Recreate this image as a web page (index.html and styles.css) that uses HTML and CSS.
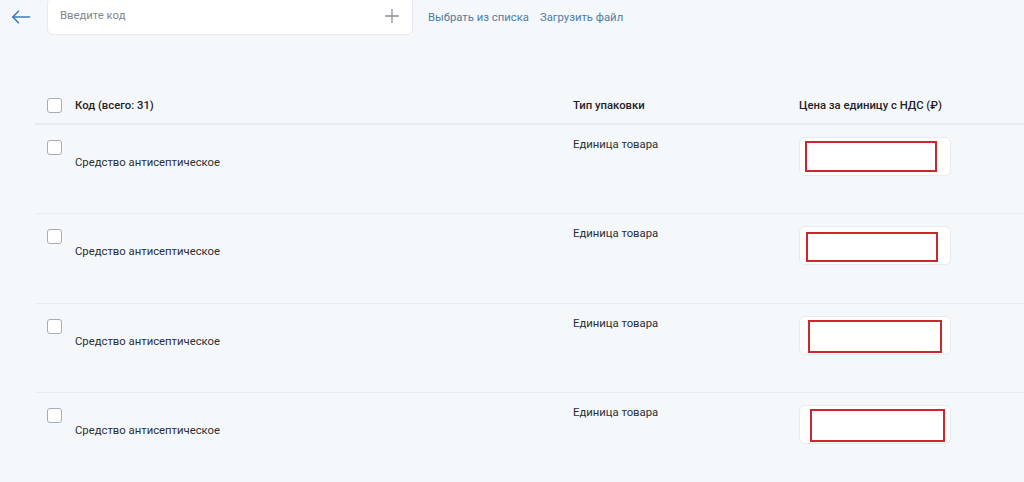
FILE: index.html
```html
<!DOCTYPE html>
<html lang="ru">
<head>
    <meta charset="UTF-8">
    <meta name="viewport" content="width=device-width, initial-scale=1.0">
    <title>Коды товаров</title>
    <link rel="stylesheet" href="styles.css">
</head>
<body>
    <div class="toolbar">
        <button class="back" aria-label="Назад">
            <svg width="20" height="14" viewBox="0 0 20 14" fill="none" stroke="#3f78bf" stroke-width="1.6" stroke-linecap="round" stroke-linejoin="round">
                <path d="M18.5 7H1.8"/>
                <path d="M7.5 1.2L1.8 7l5.7 5.8"/>
            </svg>
        </button>
        <div class="code-input">
            <input type="text" placeholder="Введите код">
            <svg class="plus" width="14" height="14" viewBox="0 0 14 14" stroke="#8a9097" stroke-width="1.3">
                <path d="M7 0v14M0 7h14"/>
            </svg>
        </div>
        <a class="link" href="#">Выбрать из списка</a>
        <a class="link" href="#">Загрузить файл</a>
    </div>

    <div class="table">
        <div class="row head">
            <span class="check"></span>
            <div class="cell">Код (всего: 31)</div>
            <div class="cell">Тип упаковки</div>
            <div class="cell">Цена за единицу с НДС (₽)</div>
        </div>

        <div class="row item">
            <span class="check"></span>
            <div class="cell name"><span class="code"></span>Средство антисептическое</div>
            <div class="cell">Единица товара</div>
            <div class="cell"><div class="price"><span class="mark"></span></div></div>
        </div>
        <div class="row item">
            <span class="check"></span>
            <div class="cell name"><span class="code"></span>Средство антисептическое</div>
            <div class="cell">Единица товара</div>
            <div class="cell"><div class="price"><span class="mark"></span></div></div>
        </div>
        <div class="row item">
            <span class="check"></span>
            <div class="cell name"><span class="code"></span>Средство антисептическое</div>
            <div class="cell">Единица товара</div>
            <div class="cell"><div class="price"><span class="mark"></span></div></div>
        </div>
        <div class="row item">
            <span class="check"></span>
            <div class="cell name"><span class="code"></span>Средство антисептическое</div>
            <div class="cell">Единица товара</div>
            <div class="cell"><div class="price"><span class="mark"></span></div></div>
        </div>
    </div>
</body>
</html>
```

FILE: styles.css
```css
body {
    margin: 0;
    background: #f5f8fa;
    font-family: Roboto, "Noto Sans", sans-serif;
    font-size: 11.3px;
    color: #2b2f33;
    overflow: hidden;
}

/* top bar: back arrow, code field, links */
.toolbar {
    display: flex;
    align-items: center;
    height: 34px;
}
.back {
    display: flex;
    width: 47px;
    padding: 0 0 0 11px;
    border: none;
    background: none;
    cursor: pointer;
}
.code-input {
    display: flex;
    align-items: center;
    width: 366px;
    height: 38px;
    margin-top: -3px;
    padding: 0 13px 0 12px;
    box-sizing: border-box;
    background: #fff;
    border: 1px solid #e6eaee;
    border-radius: 6px;
}
.code-input input {
    flex: 1;
    border: none;
    outline: none;
    font: inherit;
    color: #2b2f33;
    background: none;
    padding: 0;
}
.code-input input::placeholder {
    color: #80868d;
}
.link {
    margin-left: 15px;
    color: #4f7ca8;
    text-decoration: none;
}
.link + .link {
    margin-left: 11px;
}

/* table */
.table {
    margin: 53px 0 0 35px;
}
.row {
    display: grid;
    grid-template-columns: 28px 498px 226px 1fr;
    padding-left: 12px;
}
.head {
    height: 36px;
    align-items: center;
    font-weight: 500;
    color: #1f2327;
    border-bottom: 2px solid #e7ebee;
}
.item {
    height: 89.4px;
    box-sizing: border-box;
    padding-top: 15px;
    border-bottom: 1px solid #e9edf0;
}
.item .cell {
    line-height: 14px;
    margin-top: -2px;
}
.name .code {
    display: block;
    height: 18px;
}
.check {
    width: 15px;
    height: 15px;
    box-sizing: border-box;
    background: #fff;
    border: 1.3px solid #a7adb4;
    border-radius: 3px;
}

/* price field with highlighted frame */
.price {
    position: relative;
    width: 152px;
    height: 39px;
    margin-top: -1px;
    box-sizing: border-box;
    background: #fff;
    border: 1px solid #e7ebee;
    border-radius: 6px;
}
.mark {
    position: absolute;
    top: 3px;
    left: 5px;
    width: 132px;
    height: 31px;
    box-sizing: border-box;
    border: 2px solid #c9282c;
}
.item:nth-child(3) .mark { left: 6px; top: 5px; height: 30px; }
.item:nth-child(4) .mark { left: 8px; top: 3px; height: 33px; width: 134px; }
.item:nth-child(5) .mark { left: 10px; top: 3px; height: 33px; width: 135px; }
```
